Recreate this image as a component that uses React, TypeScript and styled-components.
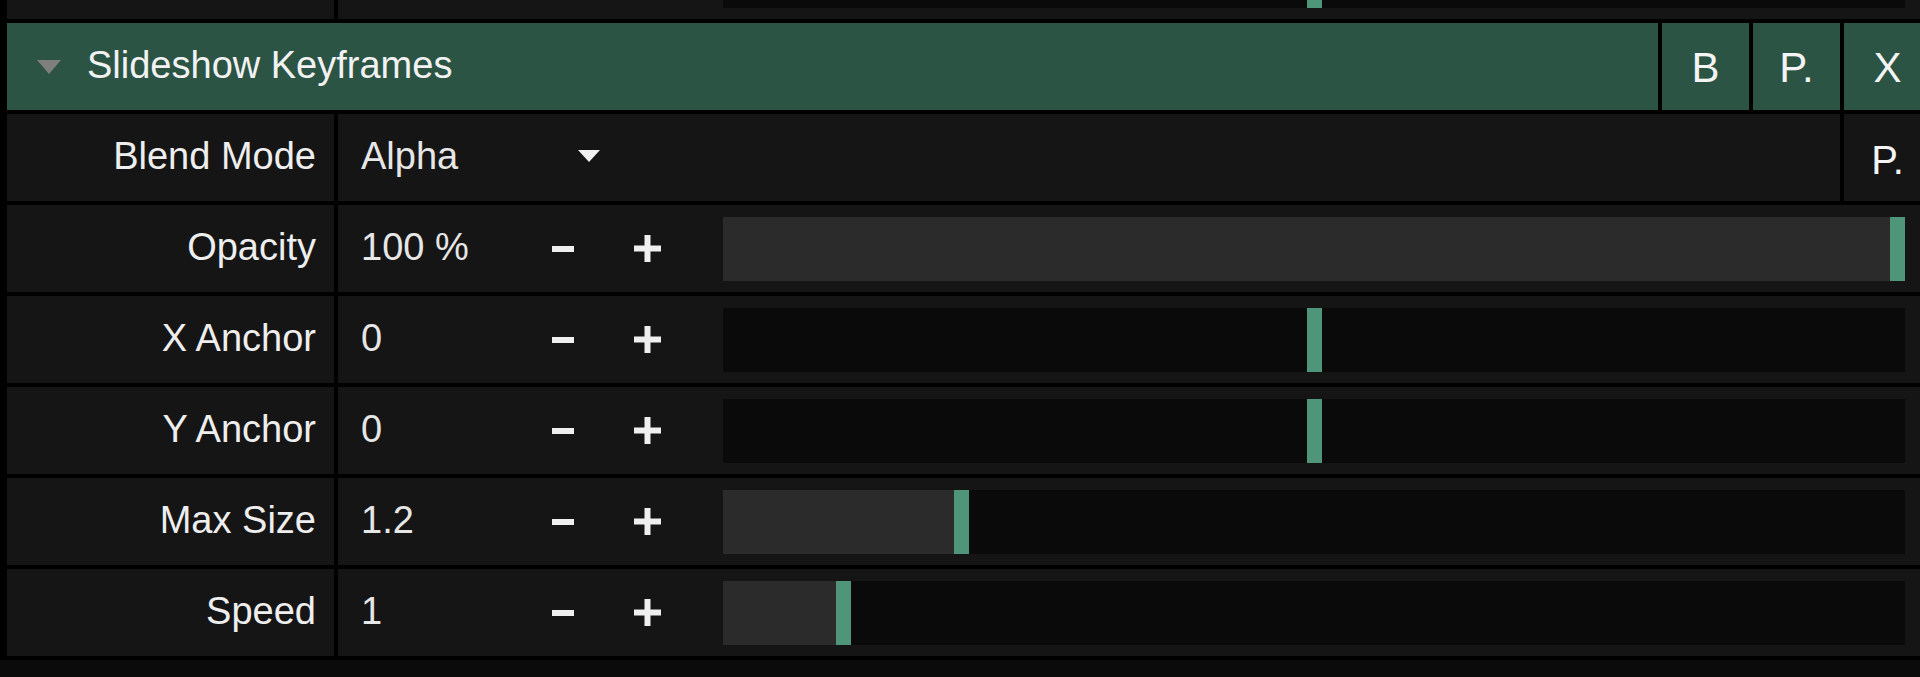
import React from "react";
import styled, { createGlobalStyle } from "styled-components";

const GlobalStyle = createGlobalStyle`
  html, body {
    margin: 0;
    padding: 0;
    background: #0b0b0b;
    overflow: hidden;
  }
  body {
    font-family: "Liberation Sans", Arial, sans-serif;
  }
  * { box-sizing: border-box; }
`;

const Viewport = styled.div`
  width: 1920px;
  height: 677px;
  overflow: hidden;
  background: #0b0b0b;
`;

const Panel = styled.div`
  width: 1931px;
  margin-top: -68px;
  padding: 0 0 4px 7px;
  background: #000;
  display: flex;
  flex-direction: column;
  gap: 4px;
`;

const Header = styled.div`
  display: flex;
  gap: 4px;
  height: 87px;
`;

const HeaderTitle = styled.div`
  flex: 1;
  background: #2b5445;
  display: flex;
  align-items: center;
  gap: 26px;
  padding: 0 0 2px 30px;
  color: #f2f2f2;
  font-size: 38px;
`;

const CollapseArrow = styled.span`
  width: 0;
  height: 0;
  margin-top: 2px;
  border-left: 12px solid transparent;
  border-right: 12px solid transparent;
  border-top: 14px solid #7f7f7f;
`;

const HeaderButton = styled.div`
  width: 87px;
  background: #2b5445;
  display: flex;
  align-items: center;
  justify-content: center;
  padding-top: 2px;
  color: #f4f4f4;
  font-size: 42px;
`;

const Row = styled.div`
  display: flex;
  gap: 4px;
  height: 87px;
`;

const LabelCell = styled.div`
  width: 327px;
  flex: none;
  background: #151515;
  display: flex;
  align-items: center;
  justify-content: flex-end;
  padding: 0 18px 3px 0;
  color: #eeeeee;
  font-size: 38px;
  white-space: nowrap;
`;

const ValueCell = styled.div<{ $padRight?: number }>`
  flex: 1;
  min-width: 0;
  background: #151515;
  display: flex;
  align-items: center;
  padding: 0 ${(p) => p.$padRight ?? 0}px 0 23px;
`;

const ValueText = styled.div<{ $width: number }>`
  width: ${(p) => p.$width}px;
  flex: none;
  padding-bottom: 3px;
  color: #e6e6e6;
  font-size: 38px;
  white-space: nowrap;
`;

const DropArrow = styled.span`
  width: 0;
  height: 0;
  margin-bottom: 3px;
  border-left: 11px solid transparent;
  border-right: 11px solid transparent;
  border-top: 12px solid #f0f0f0;
`;

const SideButton = styled.div`
  width: 87px;
  flex: none;
  background: #151515;
  display: flex;
  align-items: center;
  justify-content: center;
  padding-top: 6px;
  color: #f4f4f4;
  font-size: 40px;
`;

const StepButton = styled.div`
  width: 84px;
  height: 100%;
  flex: none;
  display: flex;
  align-items: center;
  justify-content: center;
`;

const Track = styled.div`
  position: relative;
  flex: 1;
  height: 64px;
  margin-left: 34px;
  background: #0a0a0a;
`;

const Fill = styled.div`
  position: absolute;
  top: 0;
  bottom: 0;
  background: #2b2b2b;
`;

const Marker = styled.div`
  position: absolute;
  top: 0;
  bottom: 0;
  width: 15px;
  background: #4f957a;
`;

const MinusIcon = () => (
  <svg width="22" height="6" viewBox="0 0 22 6">
    <rect x="0" y="0" width="22" height="6" fill="#efefef" />
  </svg>
);

const PlusIcon = () => (
  <svg width="27" height="27" viewBox="0 0 27 27">
    <rect x="0" y="10.5" width="27" height="6" fill="#efefef" />
    <rect x="10.5" y="0" width="6" height="27" fill="#efefef" />
  </svg>
);

type SliderProps = {
  label: string;
  value: string;
  pos: number;
  origin: number;
};

const MW = 15;

const Slider = ({ pos, origin }: { pos: number; origin: number }) => {
  const lo = Math.min(pos, origin);
  const span = Math.abs(pos - origin);
  return (
    <Track>
      {span > 0 && (
        <Fill
          style={{
            left: `calc(${lo} * (100% - ${MW}px))`,
            width: `calc(${span} * (100% - ${MW}px) + ${MW}px)`,
          }}
        />
      )}
      <Marker style={{ left: `calc(${pos} * (100% - ${MW}px))` }} />
    </Track>
  );
};

const SliderRow = ({ label, value, pos, origin }: SliderProps) => (
  <Row>
    <LabelCell>{label}</LabelCell>
    <ValueCell $padRight={26}>
      <ValueText $width={160}>{value}</ValueText>
      <StepButton>
        <MinusIcon />
      </StepButton>
      <StepButton>
        <PlusIcon />
      </StepButton>
      <Slider pos={pos} origin={origin} />
    </ValueCell>
  </Row>
);

const rows: SliderProps[] = [
  { label: "Opacity", value: "100 %", pos: 1, origin: 0 },
  { label: "X Anchor", value: "0", pos: 0.5, origin: 0.5 },
  { label: "Y Anchor", value: "0", pos: 0.5, origin: 0.5 },
  { label: "Max Size", value: "1.2", pos: 0.198, origin: 0 },
  { label: "Speed", value: "1", pos: 0.097, origin: 0 },
];

export default function App() {
  return (
    <>
      <GlobalStyle />
      <Viewport>
        <Panel>
          <Row>
            <LabelCell />
            <ValueCell $padRight={26}>
              <ValueText $width={160} />
              <StepButton />
              <StepButton />
              <Slider pos={0.5} origin={0.5} />
            </ValueCell>
          </Row>
          <Header>
            <HeaderTitle>
              <CollapseArrow />
              <span>Slideshow Keyframes</span>
            </HeaderTitle>
            <HeaderButton>B</HeaderButton>
            <HeaderButton>P.</HeaderButton>
            <HeaderButton>X</HeaderButton>
          </Header>
          <Row>
            <LabelCell>Blend Mode</LabelCell>
            <ValueCell>
              <ValueText $width={217}>Alpha</ValueText>
              <DropArrow />
            </ValueCell>
            <SideButton>P.</SideButton>
          </Row>
          {rows.map((r) => (
            <SliderRow key={r.label} {...r} />
          ))}
        </Panel>
      </Viewport>
    </>
  );
}
